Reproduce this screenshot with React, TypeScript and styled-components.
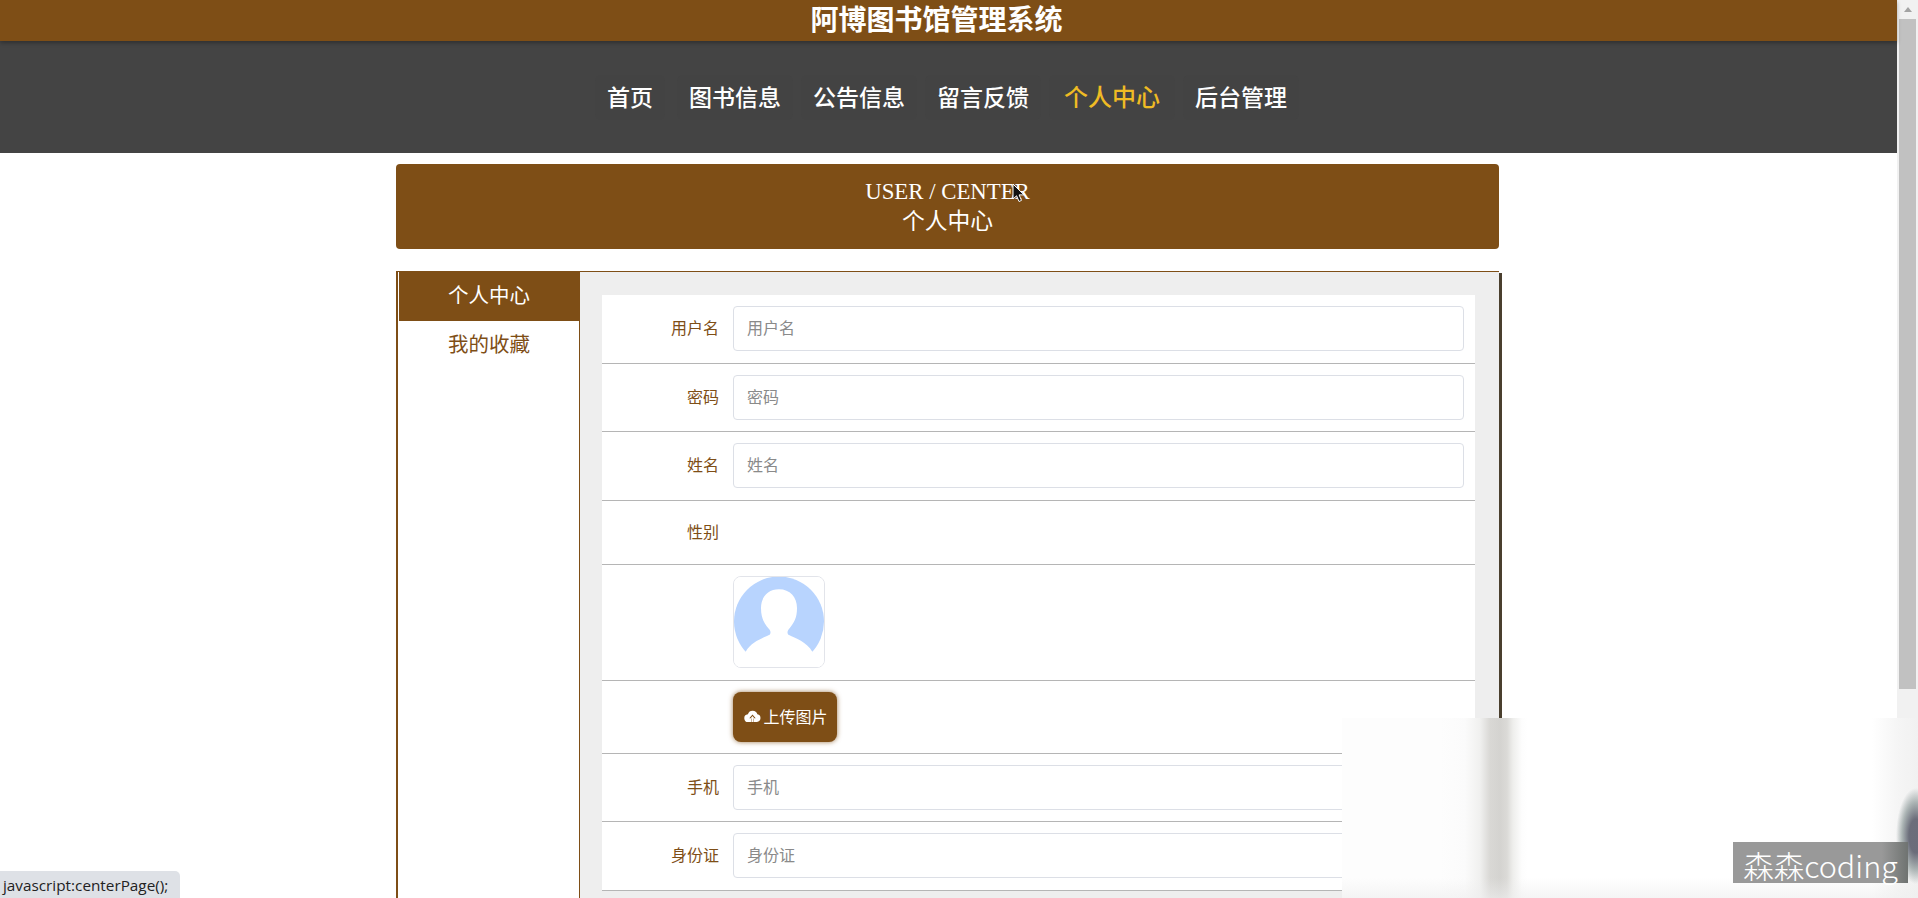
import React from 'react'
import styled, { createGlobalStyle } from 'styled-components'

const BROWN = '#7e4e16'
const CJK = '"Noto Sans CJK SC", "Noto Sans", sans-serif'

const GlobalStyle = createGlobalStyle`
  html, body {
    margin: 0;
    padding: 0;
    background: #fff;
    overflow: hidden;
  }
  * {
    box-sizing: border-box;
  }
`

const Viewport = styled.div`
  position: relative;
  display: flex;
  height: 100vh;
  overflow: hidden;
  font-family: ${CJK};
`

const Page = styled.div`
  flex: 1;
  min-width: 0;
`

const SiteTitle = styled.div`
  position: relative;
  z-index: 1;
  height: 41px;
  padding: 0 24px 5px 0;
  display: flex;
  align-items: center;
  justify-content: center;
  background: ${BROWN};
  box-shadow: 0 2px 4px rgba(0, 0, 0, 0.3);
  color: #fff;
  font-size: 28px;
  font-weight: 700;
  line-height: 28px;
`

const Nav = styled.nav`
  height: 112px;
  padding: 34px 3px 0 0;
  display: flex;
  justify-content: center;
  align-items: flex-start;
  gap: 8px;
  background: #444;
`

const NavItem = styled.a<{ $active?: boolean }>`
  height: 45px;
  padding: 0 ${props => (props.$active ? 15 : 12)}px 4px;
  display: flex;
  align-items: center;
  background: #434343;
  border-radius: 6px;
  color: ${props => (props.$active ? '#efbb24' : '#fff')};
  font-size: ${props => (props.$active ? 24 : 23)}px;
  font-weight: 500;

  &:first-child {
    margin-right: 4px;
  }
`

const Content = styled.div`
  width: 1103px;
  margin: 11px 0 0 396px;
`

const Banner = styled.div`
  height: 85px;
  padding-top: 13px;
  background: ${BROWN};
  border-radius: 4px;
  color: #fff;
  text-align: center;
  font-family: "Liberation Serif", ${CJK};
  font-size: 22.8px;
  line-height: 30px;
`

const Panel = styled.div`
  margin-top: 22px;
  display: flex;
  border-top: 1px solid ${BROWN};
  border-left: 2px solid ${BROWN};
  padding-left: 1px;
  box-shadow: 3px 2px 0 #4a3f2e;
`

const SideMenu = styled.div`
  width: 181px;
  flex-shrink: 0;
  border-right: 1px solid ${BROWN};
`

const SideItem = styled.a<{ $active?: boolean }>`
  display: block;
  height: 49px;
  text-align: center;
  font-size: 20.5px;
  line-height: 45px;
  color: ${props => (props.$active ? '#fff' : BROWN)};
  background: ${props => (props.$active ? BROWN : 'transparent')};
`

const FormArea = styled.div`
  flex: 1;
  min-width: 0;
  padding: 23px 24px 40px 22px;
  background: #eee;
`

const Form = styled.div`
  background: #fff;
`

const Row = styled.div`
  display: flex;
  align-items: center;
  padding: 11px 11px 11.5px 0;
  border-bottom: 1px solid #b5b5b5;
`

const GenderRow = styled(Row)`
  height: 64.5px;
`

const Label = styled.label`
  width: 117px;
  margin-right: 14px;
  padding-bottom: 3px;
  flex-shrink: 0;
  text-align: right;
  color: ${BROWN};
  font-size: 16px;
`

const Spacer = styled.div`
  width: 131px;
  flex-shrink: 0;
`

const Input = styled.input`
  flex: 1;
  min-width: 0;
  height: 45px;
  padding: 0 13px 3px;
  border: 1px solid #dcdfe6;
  border-radius: 4px;
  outline: none;
  font-family: ${CJK};
  font-size: 16px;

  &::placeholder {
    color: #8a8a8a;
    opacity: 1;
  }
`

const AvatarBox = styled.div`
  width: 92px;
  height: 92px;
  border: 1px solid #e2e4ea;
  border-radius: 8px;
  overflow: hidden;
  margin-bottom: 0.5px;

  svg {
    display: block;
  }
`

const UploadButton = styled.button`
  height: 50px;
  width: 104px;
  margin-bottom: -1px;
  padding: 0 0 2px 2px;
  display: flex;
  align-items: center;
  justify-content: center;
  gap: 2px;
  border: none;
  border-radius: 8px;
  background: ${BROWN};
  box-shadow: 0 0 5px rgba(126, 78, 22, 0.75);
  color: #fff;
  font-family: ${CJK};
  font-size: 16px;
`

const ScrollBar = styled.div`
  width: 21px;
  flex-shrink: 0;
  padding: 7px 2px 0;
  background: #f1f1f1;
`

const ScrollArrow = styled.div`
  width: 0;
  height: 0;
  margin: 0 auto 7px;
  border-left: 4.5px solid transparent;
  border-right: 4.5px solid transparent;
  border-bottom: 5px solid #a3a3a3;
`

const ScrollThumb = styled.div`
  height: 670px;
  background: #c1c1c1;
`

const StatusBar = styled.div`
  position: absolute;
  left: 0;
  bottom: 0;
  width: 180px;
  height: 27px;
  padding: 2px 0 0 3px;
  background: #dee1e6;
  border-top-right-radius: 5px;
  color: #222;
  font-family: "Open Sans", sans-serif;
  font-size: 15.3px;
  line-height: 25px;
  white-space: nowrap;
`

const Smear = styled.div`
  position: absolute;
  left: 1342px;
  right: 0;
  top: 718px;
  bottom: 0;
  background:
    radial-gradient(ellipse 20px 48px at 574px 118px, rgba(100, 102, 116, 0.95) 35%, rgba(112, 128, 128, 0.55) 70%, rgba(255, 255, 255, 0) 100%),
    linear-gradient(to bottom, rgba(238, 238, 238, 0) 160px, rgba(238, 238, 238, 0.6) 180px),
    linear-gradient(to right,
      #fdfdfd 0, #fdfdfd 98px, #fbfbfb 123px, #f0f0ef 138px, #d9d8d5 148px,
      #d4d3d0 158px, #dbdad7 165px, #eeeeec 171px, #fdfdfd 180px, #fff 186px, #fff 530px,
      #f5f5f5 556px, #f1f1f1 576px);
`

const Watermark = styled.div`
  position: absolute;
  right: 10px;
  bottom: 15px;
  width: 175px;
  height: 41px;
  padding-top: 6px;
  background: linear-gradient(to right, #999 85%, #6f7371 100%);
  color: #fff;
  font-size: 30.5px;
  font-weight: 300;
  line-height: 35px;
  text-align: center;
  white-space: nowrap;
`

const Pointer = styled.svg`
  position: absolute;
  left: 1012px;
  top: 183px;
`

const AvatarIcon = () => (
  <svg width="90" height="90" viewBox="1 1 90 90">
    <rect x="0" y="0" width="92" height="92" fill="#fff" />
    <circle cx="46" cy="45.5" r="45" fill="#b8d4fe" />
    <path
      d="M12.7 75.7C18 66 30 62 36 59C38 58 38 55 36 53C31 47 28 42 28 32C28 21 35 13.3 46 13.3C57 13.3 64 21 64 32C64 42 61 47 56 53C54 55 54 58 56 59C62 62 74 66 79.3 75.7L92 92L0 92Z"
      fill="#fff"
    />
  </svg>
)

const CloudUpload = () => (
  <svg width="17" height="14" viewBox="0 0 16 14">
    <path d="M4 13a3.9 3.9 0 0 1-.6-7.8A5 5 0 0 1 12.9 5.3 3.9 3.9 0 0 1 12.4 13z" fill="#fff" />
    <path d="M8 5.6L11.2 9.2H9.3V14H6.7V9.2H4.8z" fill={BROWN} />
    <path d="M8 7L10 9.4H9V13H7V9.4H6z" fill="#fff" />
  </svg>
)

const navItems = ['首页', '图书信息', '公告信息', '留言反馈', '个人中心', '后台管理']

const App: React.FC = () => {
  return (
    <Viewport>
      <GlobalStyle />
      <Page>
        <SiteTitle>阿博图书馆管理系统</SiteTitle>
        <Nav>
          {navItems.map(item => (
            <NavItem key={item} $active={item === '个人中心'}>
              {item}
            </NavItem>
          ))}
        </Nav>
        <Content>
          <Banner>
            <div>USER / CENTER</div>
            <div>个人中心</div>
          </Banner>
          <Panel>
            <SideMenu>
              <SideItem $active>个人中心</SideItem>
              <SideItem>我的收藏</SideItem>
            </SideMenu>
            <FormArea>
              <Form>
                <Row>
                  <Label>用户名</Label>
                  <Input placeholder="用户名" readOnly />
                </Row>
                <Row>
                  <Label>密码</Label>
                  <Input placeholder="密码" readOnly />
                </Row>
                <Row>
                  <Label>姓名</Label>
                  <Input placeholder="姓名" readOnly />
                </Row>
                <GenderRow>
                  <Label>性别</Label>
                </GenderRow>
                <Row>
                  <Spacer />
                  <AvatarBox>
                    <AvatarIcon />
                  </AvatarBox>
                </Row>
                <Row>
                  <Spacer />
                  <UploadButton>
                    <CloudUpload />
                    上传图片
                  </UploadButton>
                </Row>
                <Row>
                  <Label>手机</Label>
                  <Input placeholder="手机" readOnly />
                </Row>
                <Row>
                  <Label>身份证</Label>
                  <Input placeholder="身份证" readOnly />
                </Row>
              </Form>
            </FormArea>
          </Panel>
        </Content>
      </Page>
      <ScrollBar>
        <ScrollArrow />
        <ScrollThumb />
      </ScrollBar>
      <StatusBar>javascript:centerPage();</StatusBar>
      <Smear>
        <Watermark>森森coding</Watermark>
      </Smear>
      <Pointer width="13" height="20" viewBox="0 0 13 20">
        <path d="M1 1V16L4.6 12.8L7 18.5L9.5 17.4L7.1 11.9H12Z" fill="#111" stroke="#fff" strokeWidth="1" />
      </Pointer>
    </Viewport>
  )
}

export default App
